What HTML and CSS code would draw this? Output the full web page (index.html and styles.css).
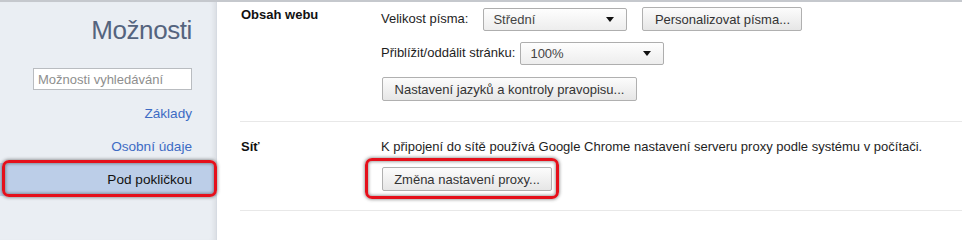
FILE: index.html
```html
<!DOCTYPE html>
<html lang="cs">
<head>
<meta charset="utf-8">
<title>Možnosti</title>
<link rel="stylesheet" href="styles.css">
</head>
<body>
<div class="page">
  <aside class="sidebar">
    <h1 class="title">Možnosti</h1>
    <div class="search"><input type="text" placeholder="Možnosti vyhledávání"></div>
    <nav class="nav">
      <div class="nav-item">Základy</div>
      <div class="nav-item">Osobní údaje</div>
      <div class="nav-item selected">Pod pokličkou<span class="mark mark-nav"></span></div>
    </nav>
  </aside>
  <main class="main">
    <section class="section first">
      <div class="label">Obsah webu</div>
      <div class="content">
        <div class="row">
          <span class="text">Velikost písma:</span>
          <div class="select sel-size"><span>Střední</span><svg width="8" height="5" viewBox="0 0 8 5"><path d="M0 0H8L4 5Z" fill="#111"/></svg></div>
          <button class="btn btn-fonts">Personalizovat písma...</button>
        </div>
        <div class="row">
          <span class="text">Přiblížit/oddálit stránku:</span>
          <div class="select sel-zoom"><span>100%</span><svg width="8" height="5" viewBox="0 0 8 5"><path d="M0 0H8L4 5Z" fill="#111"/></svg></div>
        </div>
        <div class="row row-last">
          <button class="btn btn-lang">Nastavení jazyků a kontroly pravopisu...</button>
        </div>
      </div>
    </section>
    <section class="section second">
      <div class="label">Síť</div>
      <div class="content">
        <div class="text">K připojení do sítě používá Google Chrome nastavení serveru proxy podle systému v počítači.</div>
        <div class="proxy-wrap">
          <button class="btn btn-proxy">Změna nastavení proxy...</button>
          <span class="mark mark-proxy"></span>
        </div>
      </div>
    </section>
  </main>
</div>
</body>
</html>
```

FILE: styles.css
```css
html, body {
  margin: 0;
  padding: 0;
  background: #fff;
}
body {
  font-family: "Liberation Sans", Arial, sans-serif;
  font-size: 13px;
  color: #1e1e1e;
  overflow: hidden;
}
.page {
  display: flex;
  border-top: 2px solid #c5c8cd;
  height: 100vh;
  box-sizing: border-box;
}
.sidebar {
  width: 216px;
  flex: 0 0 216px;
  background: #eaeef3;
  border-right: 1px solid #d6dbe2;
  box-shadow: inset -5px 0 5px -3px rgba(0, 0, 0, 0.07);
  padding-top: 13px;
  display: flex;
  flex-direction: column;
  align-items: stretch;
}
.title {
  margin: 0;
  padding-right: 24px;
  text-align: right;
  font-weight: normal;
  font-size: 26px;
  line-height: 30px;
  letter-spacing: -0.4px;
  color: #55647e;
}
.search {
  margin-top: 23px;
  padding-right: 24px;
  display: flex;
  justify-content: flex-end;
}
.search input {
  width: 159px;
  height: 22px;
  box-sizing: border-box;
  border: 1px solid #b9bcc0;
  background: #fff;
  padding: 0 4px;
  font-family: "Liberation Sans", Arial, sans-serif;
  font-size: 13px;
  outline: none;
}
.search input::placeholder {
  color: #8e8e8e;
}
.nav {
  margin-top: 7px;
  display: flex;
  flex-direction: column;
}
.nav-item {
  position: relative;
  height: 33px;
  line-height: 33px;
  text-align: right;
  padding-right: 24px;
  color: #3d6bc4;
  font-size: 13.6px;
}
.nav-item.selected {
  background: #bccee8;
  color: #111;
  line-height: 34px;
}
.mark {
  position: absolute;
  border: 3px solid #e5101b;
  border-radius: 7px;
  box-sizing: border-box;
  box-shadow: 0 0 3px 1px rgba(60, 60, 60, 0.45), inset 0 0 3px 1px rgba(60, 60, 60, 0.45);
  pointer-events: none;
}
.mark-nav {
  left: 2px;
  top: -3px;
  width: 215px;
  height: 37px;
}
.main {
  flex: 1;
  padding-left: 23px;
  display: flex;
  flex-direction: column;
}
.section {
  display: flex;
  border-bottom: 1px solid #e8e8e8;
}
.section.first {
  padding-top: 5px;
  padding-bottom: 20px;
}
.section.second {
  padding-top: 17px;
  padding-bottom: 19px;
}
.label {
  width: 141px;
  flex: 0 0 141px;
  font-weight: bold;
  line-height: 16px;
  padding-left: 1px;
  box-sizing: border-box;
  color: #111;
}
.content {
  display: flex;
  flex-direction: column;
}
.row {
  display: flex;
  align-items: center;
  height: 24px;
}
.row + .row {
  margin-top: 10px;
}
.row + .row.row-last {
  margin-top: 12px;
}
.text {
  line-height: 16px;
  color: #1e1e1e;
  white-space: nowrap;
}
.select {
  height: 23px;
  width: 144px;
  box-sizing: border-box;
  border: 1px solid #aeaeae;
  border-radius: 2px;
  background: linear-gradient(#fefefe, #ededed);
  display: flex;
  align-items: center;
  justify-content: space-between;
  padding: 0 12px 0 9px;
  color: #444;
}
.sel-size {
  margin-left: 15px;
}
.sel-zoom {
  margin-left: 5px;
}
.btn {
  height: 24px;
  box-sizing: border-box;
  border: 1px solid #b0b0b0;
  border-radius: 2px;
  background: linear-gradient(#fcfcfc, #e6e6e6);
  font-family: "Liberation Sans", Arial, sans-serif;
  font-size: 13px;
  color: #333;
  padding: 0;
  margin: 0;
  white-space: nowrap;
  text-align: center;
}
.btn-fonts {
  margin-left: 15px;
  width: 160px;
}
.btn-lang {
  margin-left: 1px;
  width: 255px;
}
.proxy-wrap {
  position: relative;
  margin-top: 12px;
  margin-left: 1px;
  display: flex;
}
.btn-proxy {
  width: 170px;
}
.mark-proxy {
  left: -17px;
  top: -9px;
  width: 194px;
  height: 41px;
}
```
